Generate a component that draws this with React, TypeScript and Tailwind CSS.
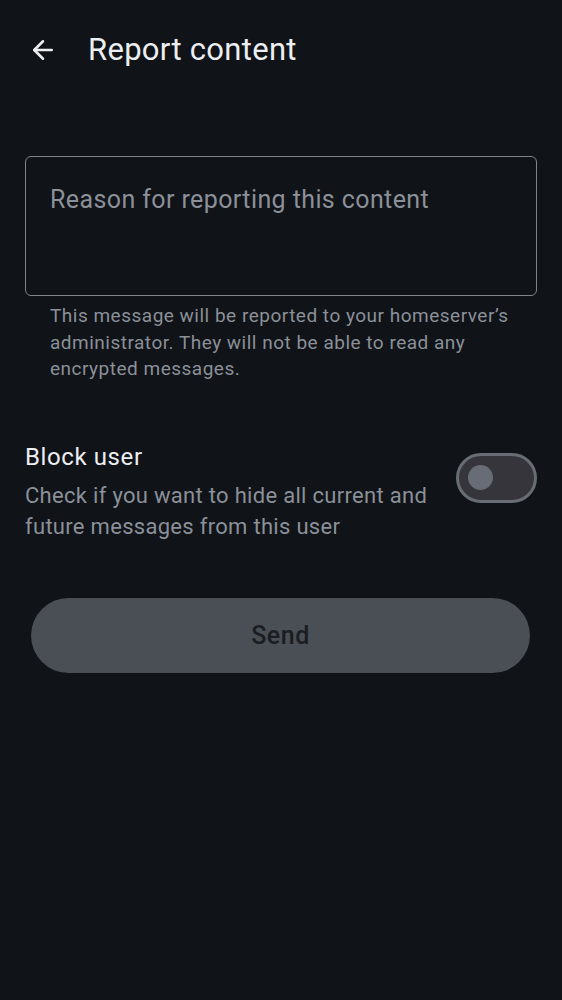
import { ArrowLeft } from "lucide-react";

const App = () => {
  return (
    <div className="min-h-screen w-full bg-[#101317] text-[#e8eaee]" style={{ fontFamily: "Roboto, 'Noto Sans', sans-serif" }}>
      <header className="flex items-center h-[100px] pl-[28px]">
        <ArrowLeft size={30} strokeWidth={2} className="text-[#eceef2]" />
        <h1 className="ml-[30px] text-[31px] font-normal tracking-[0.3px] text-[#eceef2]">Report content</h1>
      </header>

      <div className="px-[25px] pt-[56px]">
        <div className="h-[140px] rounded-[6px] border border-[#80858d] px-[24px] pt-[28px]">
          <p className="text-[25px] leading-[30px] text-[#8b9099] tracking-[0.4px]">Reason for reporting this content</p>
        </div>
        <p className="px-[25px] pt-[7px] text-[19px] leading-[26.5px] tracking-[0.5px] text-[#8b9099]">
          This message will be reported to your homeserver’s administrator. They will not be able to read any encrypted messages.
        </p>

        <div className="flex items-start justify-between mt-[58px]">
          <div className="flex flex-col">
            <span className="text-[24px] leading-[32px] tracking-[0.6px] text-[#eceef2]">Block user</span>
            <span className="text-[22px] leading-[31px] tracking-[0.3px] text-[#8b9099] mt-[7.5px] w-[420px]">
              Check if you want to hide all current and future messages from this user
            </span>
          </div>
          <div className="mt-[12px] flex h-[50px] w-[81px] shrink-0 items-center rounded-full border-[3px] border-[#686d75] bg-[#36353b] pl-[9px]">
            <div className="h-[25px] w-[25px] rounded-full bg-[#686d75]" />
          </div>
        </div>

        <button className="mt-[56px] mx-[6px] flex h-[75px] w-[499px] items-center justify-center rounded-full bg-[#4a4e55] text-[25px] font-medium tracking-[0.5px] text-[#1a1d22]">
          Send
        </button>
      </div>
    </div>
  );
};

export default App;
